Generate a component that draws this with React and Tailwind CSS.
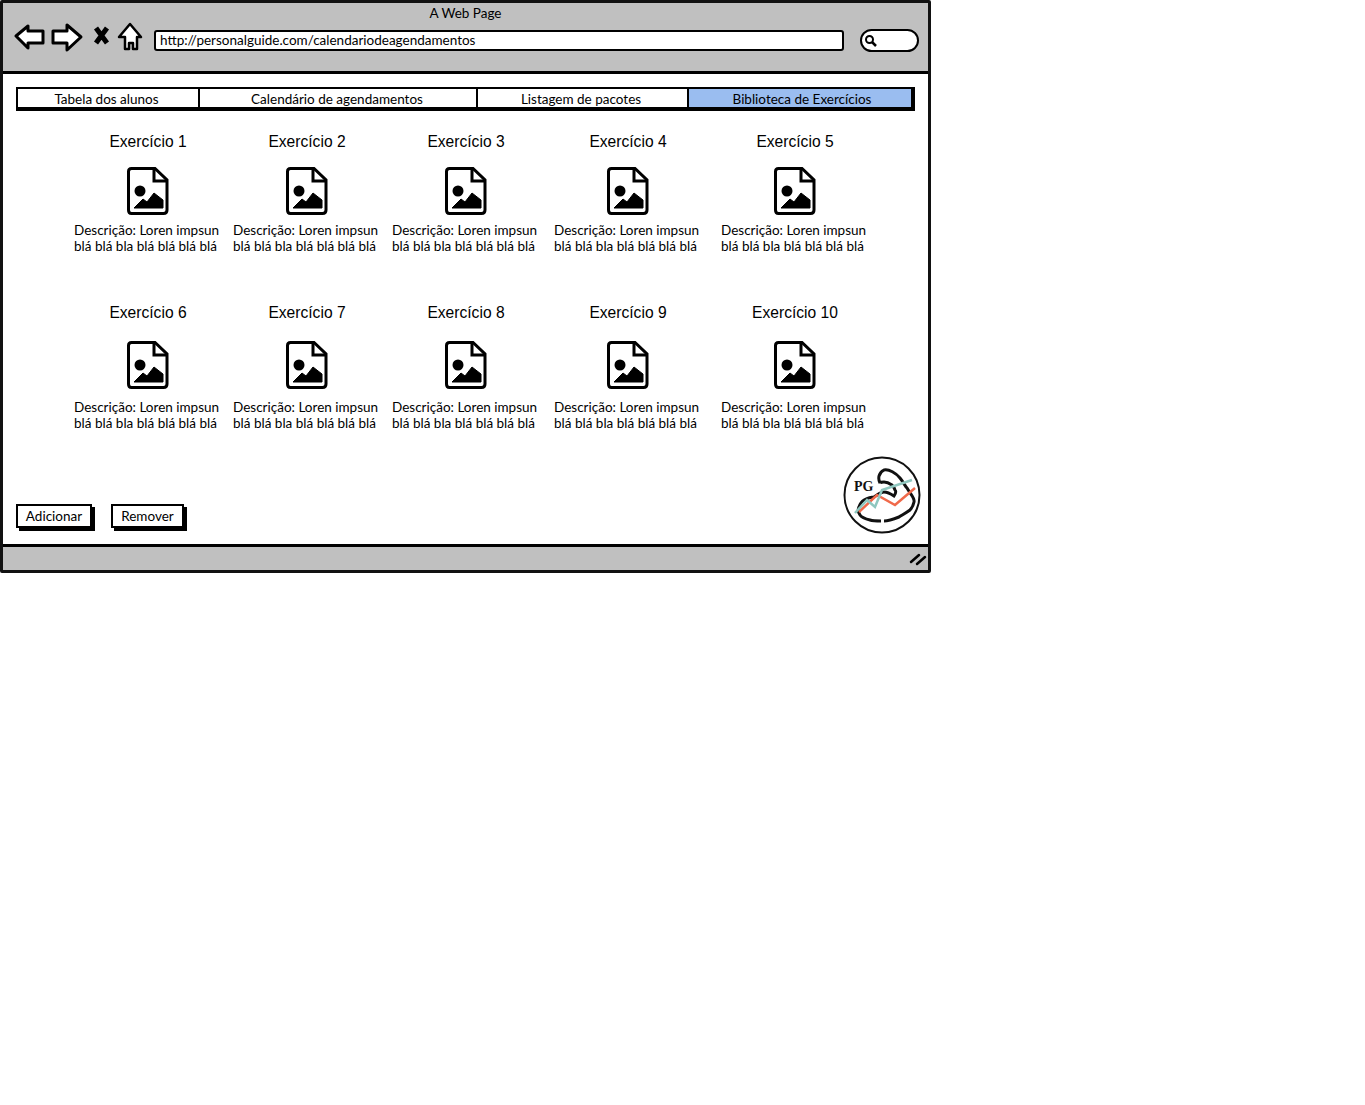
import React from 'react';

const font = { hand: 'font-["Lato","Liberation_Sans",sans-serif]' };

const exercises = [
  { name: 'Exercício 1', width: 'w-[159px]' },
  { name: 'Exercício 2', width: 'w-[159px]' },
  { name: 'Exercício 3', width: 'w-[162px]' },
  { name: 'Exercício 4', width: 'w-[167px]' },
  { name: 'Exercício 5', width: 'w-[160px]' },
];

const exercisesBottom = [
  { name: 'Exercício 6', width: 'w-[159px]' },
  { name: 'Exercício 7', width: 'w-[159px]' },
  { name: 'Exercício 8', width: 'w-[162px]' },
  { name: 'Exercício 9', width: 'w-[167px]' },
  { name: 'Exercício 10', width: 'w-[160px]' },
];

const ImageFileIcon = () => (
  <svg width="42" height="48" viewBox="0 0 42 48" className="block">
    <path d="M4.500 1.500H28L40 13V43Q40 46.500 36.500 46.500H4.500Q1.500 46.500 1.500 43V4.500Q1.500 1.500 4.500 1.500Z" fill="white" stroke="black" strokeWidth="3" />
    <path d="M27 2V14H40" fill="none" stroke="black" strokeWidth="3" />
    <circle cx="13" cy="24" r="5.500" fill="black" />
    <path d="M7 41L16 32L20 35L27 26L36 33V41Z" fill="black" stroke="black" strokeWidth="1" />
  </svg>
);

const ExerciseCard = ({ name, width, iconGap, textGap }) => (
  <div className={`${width} shrink-0`}>
    <div className="w-[148px]">
      <div className="text-center text-[15.6px] leading-5 text-black font-['Liberation_Sans',sans-serif]">{name}</div>
      <div className={`flex justify-center ${iconGap}`}>
        <ImageFileIcon />
      </div>
      <div className={`${textGap} text-[13.5px] leading-4 text-black whitespace-nowrap ${font.hand}`}>
        <div>Descrição: Loren impsun</div>
        <div>blá blá bla blá blá blá blá</div>
      </div>
    </div>
  </div>
);

const NavIcons = () => (
  <svg width="130" height="30" viewBox="0 0 130 30" className="block shrink-0">
    <path d="M2 14L14 4V9H29V21H14V26Z" fill="white" stroke="black" strokeWidth="3" strokeLinejoin="round" />
    <path d="M67 15L53 3V9H39V21H53V28Z" fill="white" stroke="black" strokeWidth="3" strokeLinejoin="round" />
    <path d="M82 6L93 21M93 6L82 21" fill="none" stroke="black" strokeWidth="5" />
    <path d="M105 15L116 2L127 15H123V27H119V21H115V27H111V15Z" fill="white" stroke="black" strokeWidth="2.500" strokeLinejoin="round" />
  </svg>
);

const Logo = () => (
  <svg width="80" height="80" viewBox="0 0 80 80" className="block">
    <circle cx="40" cy="40" r="37.500" fill="white" stroke="#111" strokeWidth="2" />
    <path d="M38 28C36 24 36 18 42 15C47 14 54 18 58 23C62 28 63 31 65 33C69 40 73 43 72 47C71 52 69 54 68 55C64 58 60 60 57 62C52 64 47 66 42 66M39 66C34 66 31 66 28 65C24 64 20 63 18 60C16 57 16 54 17 52C18 49 20 46 22 45C26 43 29 42 32 42L35 40C38 38 40 37 42 37C46 37 49 39 52 41C54 38 54 36 53 35C52 32 51 31 50 30C47 28 44 27 42 27C40 27 39 27 38 28" fill="none" stroke="#111" strokeWidth="3" />
    <path d="M17 57L35 40L53 50L73 33" fill="none" stroke="#f0694a" strokeWidth="2.500" />
    <path d="M13 58L25 45L33 52L40 35L70 25" fill="none" stroke="#8fc7bf" strokeWidth="2.500" />
    <text x="12" y="36" fontFamily="Liberation Serif, serif" fontWeight="700" fontSize="14" fill="#111">PG</text>
  </svg>
);

const Tab = ({ label, className }) => (
  <div className={`flex items-center justify-center h-full pt-[2px] text-[13.5px] text-black ${font.hand} ${className}`}>
    {label}
  </div>
);

const Button = ({ label, className }) => (
  <button className={`h-[24px] pb-[2px] bg-white border-2 border-black shadow-[3px_3px_0_#000] text-[13.5px] text-black ${font.hand} ${className}`}>
    {label}
  </button>
);

export default function App() {
  return (
    <div className="w-[1365px] h-[1105px] bg-white">
      <div className="w-[931px] h-[573px] flex flex-col border-[3px] border-[#111] rounded-[2px] bg-white">
        <header className="h-[71px] shrink-0 bg-[#c0c0c0] border-b-[3px] border-black">
          <div className={`text-center pt-[2px] text-[13.5px] leading-4 text-black ${font.hand}`}>A Web Page</div>
          <div className="flex items-start mt-[1px] pl-[11px]">
            <NavIcons />
            <div className={`ml-[10px] mt-[8px] w-[690px] h-[21px] flex items-center pl-[4px] bg-white border-2 border-black rounded-[3px] text-[13.5px] text-black ${font.hand}`}>
              http://personalguide.com/calendariodeagendamentos
            </div>
            <div className="ml-[16px] mt-[7px] w-[59px] h-[23px] flex items-center pl-[2px] bg-white border-2 border-black rounded-full">
              <svg width="13" height="13" viewBox="0 0 13 13">
                <circle cx="5.500" cy="5.500" r="3.500" fill="none" stroke="black" strokeWidth="2" />
                <path d="M8 8L12 12" stroke="black" strokeWidth="2.500" />
              </svg>
            </div>
          </div>
        </header>

        <main className="flex-1 flex flex-col">
          <nav className="ml-[13px] mt-[13px] w-[899px] h-[24px] flex shrink-0 border-2 border-black border-b-[4px] border-r-[4px] bg-white">
            <Tab label="Tabela dos alunos" className="w-[182px] pr-[3px] border-r-2 border-black" />
            <Tab label="Calendário de agendamentos" className="w-[278px] pr-[2px] border-r-2 border-black" />
            <Tab label="Listagem de pacotes" className="w-[211px] pr-[3px] border-r-2 border-black" />
            <Tab label="Biblioteca de Exercícios" className="flex-1 pl-[4px] bg-[#9abdf0]" />
          </nav>

          <div className="ml-[71px] mt-[21px] flex">
            {exercises.map((item) => <ExerciseCard key={item.name} iconGap="mt-[15px]" textGap="mt-[7px]" {...item} />)}
          </div>
          <div className="ml-[71px] mt-[49px] flex">
            {exercisesBottom.map((item) => <ExerciseCard key={item.name} iconGap="mt-[18px]" textGap="mt-[10px]" {...item} />)}
          </div>

          <div className="flex-1 flex items-end justify-between pl-[13px] pr-[6px] pb-[9px]">
            <div className="flex gap-[19px] pb-[7px]">
              <Button label="Adicionar" className="w-[76px]" />
              <Button label="Remover" className="w-[73px]" />
            </div>
            <Logo />
          </div>
        </main>

        <footer className="h-[26px] shrink-0 flex items-center justify-end pr-[1px] bg-[#c0c0c0] border-t-[3px] border-black">
          <svg width="18" height="14" viewBox="0 0 18 14">
            <path d="M2 10L10 3M8 12L16 5" fill="none" stroke="black" strokeWidth="2.500" strokeLinecap="round" />
          </svg>
        </footer>
      </div>
    </div>
  );
}
